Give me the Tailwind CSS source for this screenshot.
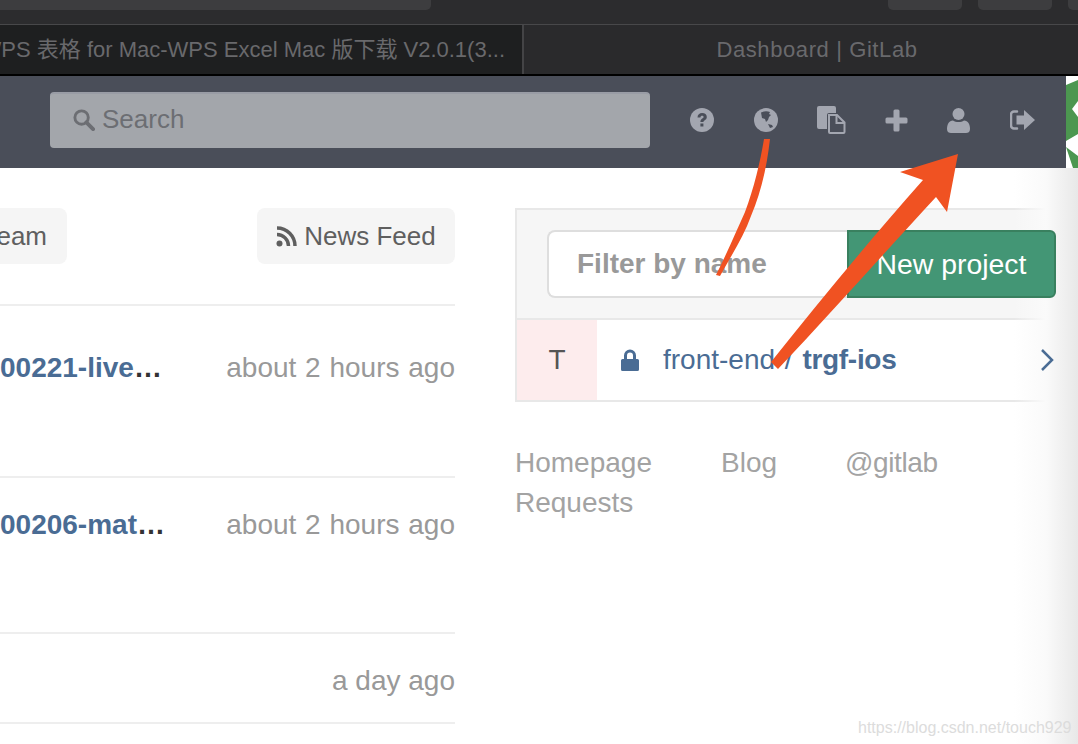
<!DOCTYPE html>
<html lang="en">
  <head>
    <meta charset="UTF-8" />
    <title>Dashboard | GitLab</title>
    <script src="https://cdn.jsdelivr.net/npm/@tailwindcss/browser@4"></script>
  </head>
  <body class="bg-white font-['Liberation_Sans','Noto_Sans_CJK_SC',sans-serif]">
    <div class="relative h-[744px] w-[1078px] overflow-hidden">

      <!-- browser toolbar -->
      <div class="flex h-[24px] items-start bg-[#2c2c2e]">
        <div class="h-[10px] w-[431px] rounded-br-[5px] bg-[#3d3d3f]"></div>
        <div class="ml-[457px] flex gap-[16px]">
          <div class="h-[10px] w-[74px] rounded-b-[5px] bg-[#3d3d3f]"></div>
          <div class="h-[10px] w-[74px] rounded-b-[5px] bg-[#3d3d3f]"></div>
          <div class="h-[10px] w-[10px] rounded-bl-[5px] bg-[#3d3d3f]"></div>
        </div>
      </div>

      <!-- tabs -->
      <div class="flex h-[52px] border-t border-[#48484a] border-b-2 border-b-black bg-[#2a2a2c] text-[22px] leading-[50px] text-[#69696c]">
        <div class="relative w-[524px] overflow-hidden whitespace-nowrap border-r-2 border-[#444446] bg-[#1e1f20]">
          <span class="absolute right-[17px] top-0">WPS 表格 for Mac-WPS Excel Mac 版下载 V2.0.1(3...</span>
        </div>
        <div class="flex-1 pl-[32px] text-center tracking-[0.6px]">Dashboard | GitLab</div>
      </div>

      <!-- gitlab header -->
      <div class="flex">
        <div class="flex h-[92px] w-[1066px] items-center bg-[#4a4e59] pb-[4px] pl-[50px]">
          <div class="flex h-[56px] w-[600px] items-center gap-[7px] rounded-[4px] border-t-2 border-[#999ca5] bg-[#a3a6ab] pb-[4px] pl-[22px] text-[26px] text-[#6c6e73]">
            <svg class="h-[23px] w-[23px]" viewBox="0 0 24 24" fill="none" stroke="#6c6e73"><circle cx="10" cy="10" r="7" stroke-width="3"/><path d="M15 15l7 7" stroke-width="4" stroke-linecap="round"/></svg>
            <span>Search</span>
          </div>
          <div class="ml-[40px] flex items-center text-[#a3a6b0]">
            <svg class="h-[24px] w-[24px]" viewBox="0 0 24 24"><circle cx="12" cy="12" r="12" fill="currentColor"/><path d="M7.500 9.500C7.500 6.500 9.500 5 12.200 5c2.700 0 4.600 1.600 4.600 3.900 0 3.300-3.400 3.200-3.400 5.100H10.400c0-3.400 3.200-3.500 3.200-5 0-.8-.6-1.300-1.500-1.300-1 0-1.600.6-1.700 1.800zM10.400 15.500h3v3h-3z" fill="#4a4e59"/></svg>
            <svg class="ml-[40px] h-[24px] w-[24px]" viewBox="0 0 24 24"><circle cx="12" cy="12" r="12" fill="currentColor"/><path d="M7 4.500c3-1.500 6-1.800 9-.5l-1 2 2 1-2 2-1 3-2 2-1-3-3-1z" fill="#4a4e59"/><path d="M14 16l4 1 1 2-3 1z" fill="#4a4e59"/></svg>
            <svg class="ml-[39px] h-[28px] w-[29px]" viewBox="0 0 29 28"><path d="M0 2a2 2 0 0 1 2-2h15a2 2 0 0 1 2 2v5H12a2 2 0 0 0-2 2v14H2a2 2 0 0 1-2-2z" fill="currentColor"/><path d="M12 9h8l7.500 7.500V26a1 1 0 0 1-1 1H13a1 1 0 0 1-1-1z" fill="none" stroke="currentColor" stroke-width="2"/><path d="M19.500 9v8h8" fill="none" stroke="currentColor" stroke-width="2"/></svg>
            <svg class="ml-[39px] h-[23px] w-[23px]" viewBox="0 0 23 23"><path d="M8.500 2a1.500 1.500 0 0 1 1.500-1.500h3A1.500 1.500 0 0 1 14.500 2v6.500H21a1.500 1.500 0 0 1 1.500 1.500v3a1.500 1.500 0 0 1-1.500 1.500h-6.500V21a1.500 1.500 0 0 1-1.500 1.500h-3A1.500 1.500 0 0 1 8.500 21v-6.500H2A1.500 1.500 0 0 1 .5 13v-3A1.500 1.500 0 0 1 2 8.500h6.500z" fill="currentColor"/></svg>
            <svg class="ml-[39px] h-[25px] w-[23px]" viewBox="0 0 23 25"><circle cx="11.500" cy="6" r="6" fill="currentColor"/><path d="M0 21c0-5 2-8 6-8.500 3 2 8 2 11 0 4 .5 6 3.500 6 8.500 0 3-2 4-4 4H4c-2 0-4-1-4-4z" fill="currentColor"/></svg>
            <svg class="ml-[40px] h-[20px] w-[25px]" viewBox="0 0 25 20"><path d="M7 1.500H4A3 3 0 0 0 1 4.500v11a3 3 0 0 0 3 3h3" fill="none" stroke="currentColor" stroke-width="2.500" stroke-linecap="round"/><path d="M14 0l11 10-11 10v-5.500H6.500v-9H14z" fill="currentColor"/></svg>
          </div>
        </div>
        <!-- bit of a green window behind -->
        <div class="h-[92px] w-[12px] bg-white">
          <svg class="h-[92px] w-[12px]" viewBox="0 0 12 92"><path d="M0 9L12 4V25L6 33L12 41V58L0 65z" fill="#4c9750"/><path d="M0 71L12 80V92H7z" fill="#4c9750"/></svg>
        </div>
      </div>

      <!-- page content -->
      <div class="flex">
        <div class="w-[455px] shrink-0">
          <div class="flex justify-between pt-[40px]">
            <div class="flex h-[56px] w-[67px] items-center justify-end rounded-r-[8px] bg-[#f5f5f5] pr-[20px] text-[26px] text-[#5f5f5f]">eam</div>
            <div class="flex h-[56px] w-[198px] items-center justify-center gap-[7px] rounded-[8px] bg-[#f5f5f5] text-[26px] text-[#5f5f5f]">
              <svg class="h-[21px] w-[21px]" viewBox="0 0 21 21" fill="none" stroke="#5f5f5f" stroke-width="3.500"><path d="M1 8.500a11.500 11.500 0 0 1 11.500 11.500"/><path d="M1 2a18 18 0 0 1 18 18"/><circle cx="3.500" cy="17.500" r="3" fill="#5f5f5f" stroke="none"/></svg>
              <span>News Feed</span>
            </div>
          </div>
          <div class="mt-[40px] flex h-[172px] items-start justify-between border-t-2 border-[#eeeeee] pt-[41px] text-[28px]">
            <div class="whitespace-nowrap font-bold text-[#4a6c94]">00221-live<span class="text-[#333333]">…</span></div>
            <div class="text-[#999999] [word-spacing:1px]">about 2 hours ago</div>
          </div>
          <div class="flex h-[156px] items-start justify-between border-t-2 border-[#eeeeee] pt-[26px] text-[28px]">
            <div class="whitespace-nowrap font-bold text-[#4a6c94]">00206-mat<span class="text-[#333333]">…</span></div>
            <div class="text-[#999999] [word-spacing:1px]">about 2 hours ago</div>
          </div>
          <div class="flex h-[92px] items-start justify-end border-y-2 border-[#eeeeee] pt-[26px] text-[28px] text-[#999999]">a day ago</div>
        </div>

        <div class="ml-[60px] flex-1">
          <div class="mt-[40px] border-2 border-r-0 border-[#e8e8e8]">
            <div class="flex h-[110px] items-center border-b-2 border-[#e8e8e8] bg-[#f6f6f6] pl-[30px]">
              <div class="flex h-[68px] w-[300px] items-center rounded-l-[8px] border-2 border-r-0 border-[#dedede] bg-white pl-[28px] text-[28px] font-bold text-[#999999]">Filter by name</div>
              <div class="relative z-10 flex h-[68px] w-[209px] items-center justify-center rounded-r-[6px] border-2 border-[#39805f] bg-[#439675] text-[28.4px] text-white">New project</div>
            </div>
            <div class="flex h-[80px] items-center">
              <div class="flex h-full w-[80px] items-center justify-center bg-[#fdeced] text-[28px] text-[#555555]">T</div>
              <svg class="ml-[24px] h-[22px] w-[18px]" viewBox="0 0 18 22"><path d="M3 10V6.500a6 6 0 0 1 12 0V10h1.500a1.500 1.500 0 0 1 1.500 1.500v9a1.500 1.500 0 0 1-1.500 1.500h-15A1.500 1.500 0 0 1 0 20.500v-9A1.500 1.500 0 0 1 1.500 10zM6 10h6V6.500a3 3 0 0 0-6 0z" fill="#4a6c94"/></svg>
              <div class="ml-[24px] text-[28px] text-[#4a6c94] [word-spacing:2px]">front-end / <span class="font-bold tracking-[-0.3px]">trgf-ios</span></div>
              <svg class="relative z-10 ml-[144px] h-[24px] w-[14px]" viewBox="0 0 14 24" fill="none" stroke="#4a6c94" stroke-width="2.500"><path d="M2 2l10 10L2 22"/></svg>
            </div>
          </div>
          <div class="mt-[41px] text-[28px] leading-[40px] text-[#a3a3a3]">
            <div class="flex">
              <span class="w-[206px]">Homepage</span>
              <span class="w-[124px]">Blog</span>
              <span class="tracking-[-0.4px]">@gitlab</span>
            </div>
            <div>Requests</div>
          </div>
        </div>
      </div>

      <!-- right edge shadow of the next window -->
      <div class="absolute bottom-0 right-0 top-[168px] w-[64px] bg-gradient-to-r from-transparent via-[#fafafa] via-50% to-[#e8e8e8]"></div>

      <!-- watermark -->
      <div class="absolute left-[858px] top-[716px] text-[16px] text-[#dcdcdc]">https://blog.csdn.net/touch929</div>

      <!-- hand drawn arrows -->
      <svg class="absolute left-0 top-0 z-20" width="1078" height="744" viewBox="0 0 1078 744" fill="none">
        <path d="M764 139L770 139C767 165 762 190 751 216C744 236 731 256 720 276L716 275C727 253 736 232 745 212C754 188 760 163 764 139Z" fill="#f05222"/>
        <path d="M958 154L900 172L923 180C870 240 818 303 771 362L778 369C832 312 885 252 936 197L947 212Z" fill="#f05222"/>
      </svg>
    </div>
  </body>
</html>
